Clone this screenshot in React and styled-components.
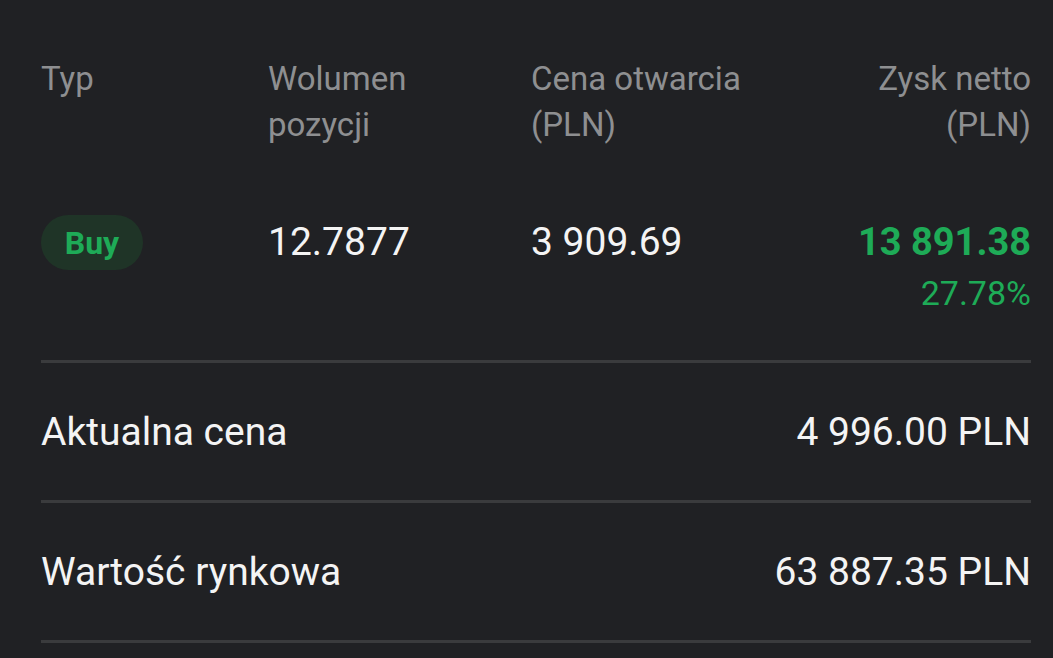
import React from 'react'
import styled, { createGlobalStyle } from 'styled-components'

const GlobalStyle = createGlobalStyle`
  html, body {
    margin: 0;
    padding: 0;
    background: #202124;
  }
  body {
    font-family: Roboto, "Noto Sans", sans-serif;
  }
`

const Panel = styled.div`
  background: #202124;
  min-height: 658px;
  padding: 56px 22px 0 41px;
  box-sizing: border-box;
  color: #ffffff;
`

const Grid = styled.div`
  display: grid;
  grid-template-columns: 227px 263px 1fr auto;
`

const HeadCell = styled.div`
  color: #8e8f91;
  font-size: 33px;
  line-height: 46px;
  text-align: ${p => (p.right ? 'right' : 'left')};
`

const DataGrid = styled(Grid)`
  margin-top: 70px;
  padding-bottom: 49px;
`

const Cell = styled.div`
  font-size: 39px;
  line-height: 48px;
  color: #f4f4f4;
`

const Pill = styled.span`
  display: inline-flex;
  align-items: center;
  justify-content: center;
  width: 102px;
  height: 55px;
  margin-top: -3px;
  border-radius: 28px;
  background: #1f3427;
  color: #1eab57;
  font-weight: 700;
  font-size: 32px;
`

const Profit = styled.div`
  color: #1eab57;
  font-weight: 700;
  font-size: 38px;
  line-height: 48px;
  text-align: right;
`

const Percent = styled.div`
  color: #1eab57;
  font-size: 34px;
  line-height: 36px;
  margin-top: 9px;
  text-align: right;
`

const Row = styled.div`
  display: flex;
  justify-content: space-between;
  align-items: center;
  height: 137px;
  border-top: 3px solid #3a3b3d;
  font-size: 39px;
  color: #f4f4f4;
  &:last-child {
    border-bottom: 3px solid #3a3b3d;
  }
`

const details = [
  { label: 'Aktualna cena', value: '4 996.00 PLN' },
  { label: 'Wartość rynkowa', value: '63 887.35 PLN' },
]

export default function App() {
  return (
    <>
      <GlobalStyle />
      <Panel>
        <Grid>
          <HeadCell>Typ</HeadCell>
          <HeadCell>Wolumen<br />pozycji</HeadCell>
          <HeadCell>Cena otwarcia<br />(PLN)</HeadCell>
          <HeadCell right>Zysk netto<br />(PLN)</HeadCell>
        </Grid>
        <DataGrid>
          <div><Pill>Buy</Pill></div>
          <Cell>12.7877</Cell>
          <Cell>3 909.69</Cell>
          <div>
            <Profit>13 891.38</Profit>
            <Percent>27.78%</Percent>
          </div>
        </DataGrid>
        <div>
          {details.map(d => (
            <Row key={d.label}>
              <span>{d.label}</span>
              <span>{d.value}</span>
            </Row>
          ))}
        </div>
      </Panel>
    </>
  )
}
